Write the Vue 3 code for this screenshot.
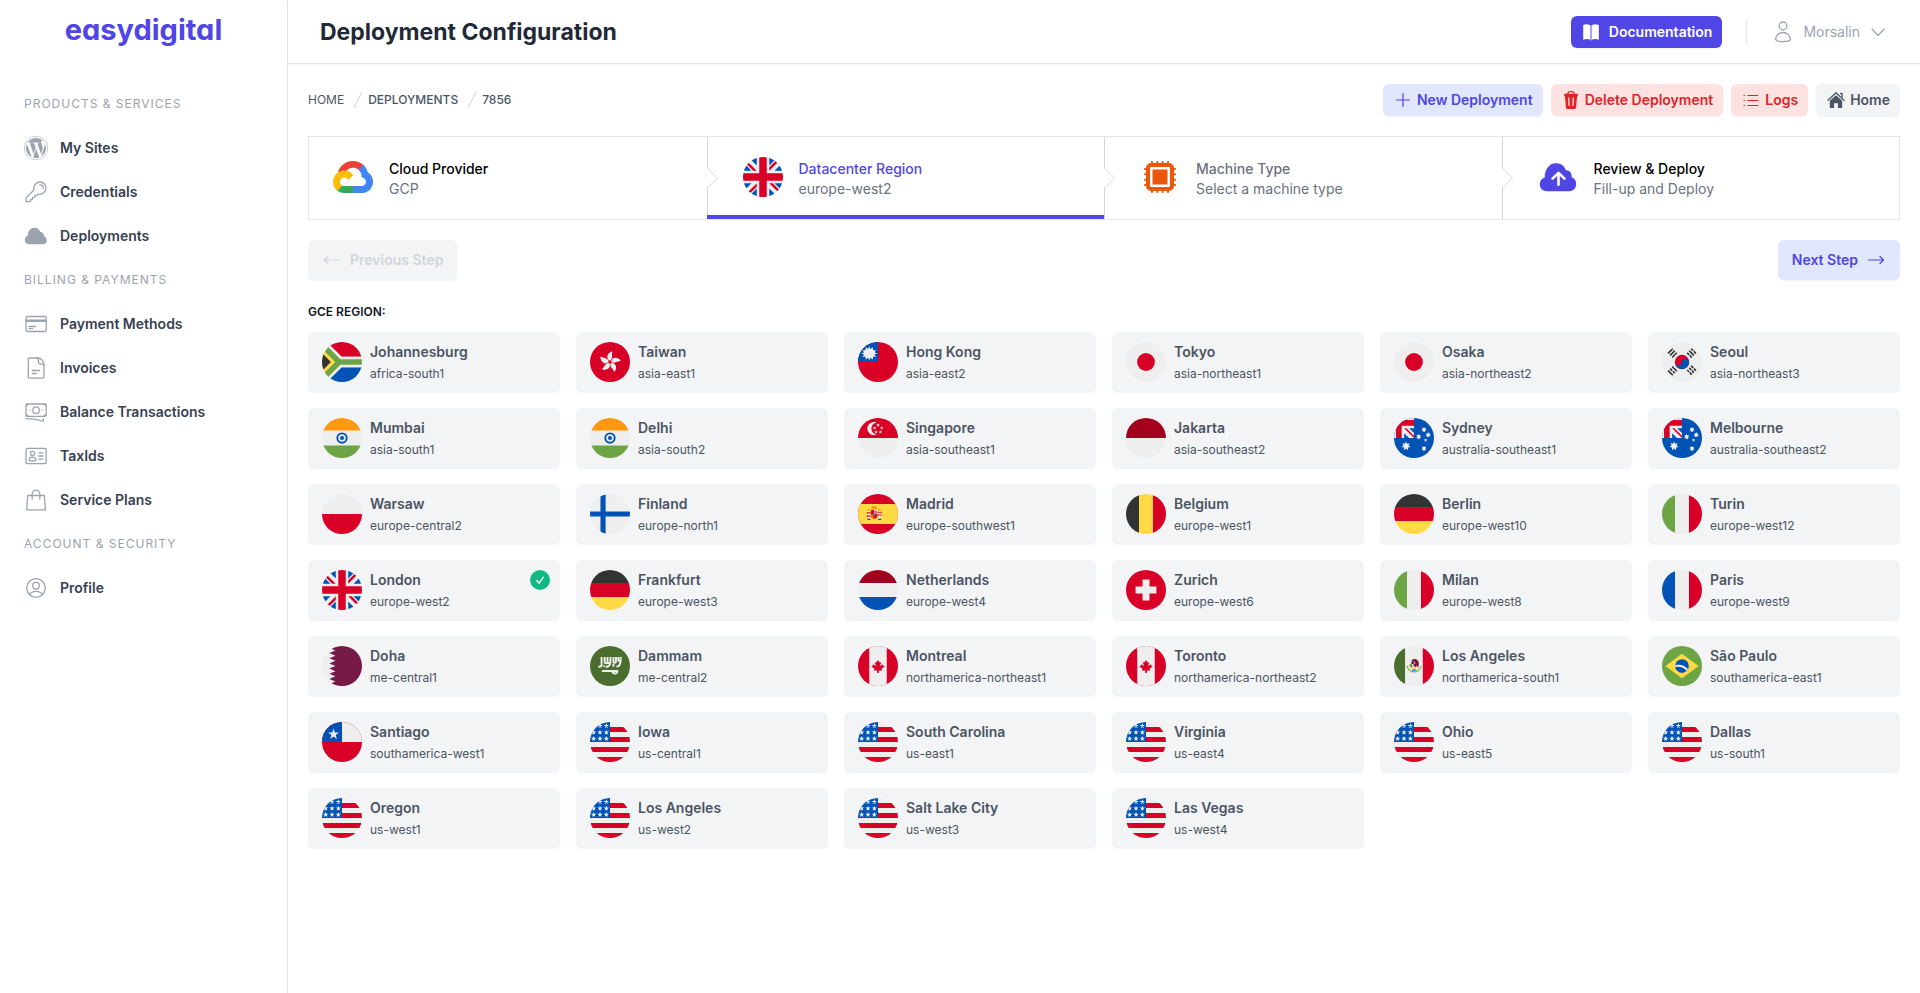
<template>
  <div class="layout">
    <!-- icon + flag sprite -->
    <svg class="sprite" aria-hidden="true">
      <symbol id="icon-wordpress" viewBox="0 0 512 512">
        <circle cx="256" cy="256" r="249" fill="none" stroke="currentColor" stroke-width="12" />
        <path fill="currentColor" d="M61.7 169.4l101.5 278C92.2 413 43.3 340.2 43.3 256c0-30.9 6.6-60.1 18.4-86.6zm337.9 75.9c0-26.3-9.4-44.5-17.5-58.7-10.8-17.5-20.9-32.4-20.9-49.9 0-19.6 14.8-37.8 35.7-37.8.9 0 1.8.1 2.8.2-37.9-34.7-88.3-55.9-143.7-55.9-74.3 0-139.7 38.1-177.8 95.9 5 .2 9.7.3 13.7.3 22.2 0 56.7-2.7 56.7-2.7 11.5-.7 12.8 16.2 1.4 17.5 0 0-11.5 1.3-24.3 2l77.5 230.4L249.8 247l-33.1-90.8c-11.5-.7-22.3-2-22.3-2-11.5-.7-10.1-18.2 1.3-17.5 0 0 35.1 2.7 56 2.7 22.2 0 56.7-2.7 56.7-2.7 11.5-.7 12.8 16.2 1.4 17.5 0 0-11.5 1.3-24.3 2l76.9 228.7 21.2-70.9c9-29.4 16-50.5 16-68.7zm-139.9 29.3l-63.8 185.5c19.1 5.6 39.2 8.7 60.1 8.7 24.8 0 48.5-4.3 70.6-12.1-.6-.9-1.1-1.9-1.5-2.9l-65.4-179.2zm183-120.7c.9 6.8 1.4 14 1.4 21.9 0 21.6-4 45.8-16.2 76.2l-65 187.9C426.2 403 468.7 334.5 468.7 256c0-37-9.4-71.8-26-102.1z" />
      </symbol>
      <symbol id="icon-key" viewBox="0 0 24 24">
        <g fill="none" stroke="currentColor" stroke-width="1.3" stroke-linejoin="round" stroke-linecap="round">
          <path d="M9.7 10.2C9.2 6.3 11.6 2 15.9 2c3.4 0 6.1 2.7 6.1 6.100 0 4.200-4.100 6.900-8.200 6.200l-1.200 1.300h-1.700l-.4 1.700-2 .3-.2 1.900-1.800.2v1.900H2v-3.700z" />
          <path d="M15.8 4.8a3.600 3.600 0 0 1 3.500 3.500" />
        </g>
      </symbol>
      <symbol id="icon-cloud" viewBox="0 0 24 24">
        <path fill="currentColor" d="M5 20.300a4.300 4.300 0 0 1-3.600-6.500 4.200 4.200 0 0 1 2.400-2.200C3.700 7 6.600 3.800 10.500 3.800c3 0 4.900 1.600 5.900 4.300 2.300.1 3.600 1.800 3.500 4 1.700.9 2.900 2.300 2.900 4.300 0 2.200-1.600 3.900-3.900 3.900z" />
      </symbol>
      <symbol id="icon-card" viewBox="0 0 24 24">
        <g fill="none" stroke="currentColor" stroke-width="1.3" stroke-linecap="round">
          <rect x="2" y="4.500" width="20.200" height="15" rx="1.800" />
          <path d="M2 8.100h20M2 9.300h20M5 14.500h6.500M5 16.700h3.500" />
        </g>
      </symbol>
      <symbol id="icon-document" viewBox="0 0 24 24">
        <g fill="none" stroke="currentColor" stroke-width="1.300" stroke-linecap="round" stroke-linejoin="round">
          <path d="M5.500 2h8.300c3.200 0 6.200 3.400 6.200 6.600v12.300a1.200 1.200 0 0 1-1.200 1.200H5.500a1.200 1.200 0 0 1-1.200-1.200V3.200A1.200 1.200 0 0 1 5.500 2z" />
          <path d="M12.800 2c1.700.5 1.800 2 1.700 4.300 0 1 .4 1.500 1.400 1.500 2.100 0 3.600.3 4.100 1.700M8.300 14.500h7.500M8.300 17.500h4" />
        </g>
      </symbol>
      <symbol id="icon-cash" viewBox="0 0 24 24">
        <g fill="none" stroke="currentColor" stroke-width="1.300" stroke-linecap="round" stroke-linejoin="round">
          <rect x="2" y="4" width="20.200" height="12.300" rx="1.200" />
          <circle cx="12.100" cy="10.200" r="3.300" />
          <path d="M2.500 5.600l1.700-1.400M21.700 5.600L20 4.200M2.500 14.800l1.700 1.300M21.700 14.800L20 16.100M6 10.200h.1M18.100 10.200h.1M2 18.700c6 0 11 .6 16.200 2.300.8.200 1.300-.2 1.300-1v-1.200" />
        </g>
      </symbol>
      <symbol id="icon-id" viewBox="0 0 24 24">
        <g fill="none" stroke="currentColor" stroke-width="1.300" stroke-linecap="round">
          <rect x="2" y="4.300" width="20.200" height="15.400" rx="1.800" />
          <circle cx="8.500" cy="9.500" r="2.100" />
          <path d="M5.200 16.300c0-2.100 1.300-3.100 3.300-3.100s3.300 1 3.300 3.100c-1.500.5-5 .5-6.600 0zM14.800 8.800h4.300M14.800 12h4.300M14.800 15.200h4.300" />
        </g>
      </symbol>
      <symbol id="icon-bag" viewBox="0 0 24 24">
        <g fill="none" stroke="currentColor" stroke-width="1.300" stroke-linecap="round" stroke-linejoin="round">
          <path d="M3.800 7.500h16.500l1.100 14.300H2.700zM8.200 11.200V6a3.800 3.800 0 0 1 7.600 0v5.200" />
        </g>
      </symbol>
      <symbol id="icon-profile" viewBox="0 0 24 24">
        <g fill="none" stroke="currentColor" stroke-width="1.300" stroke-linecap="round">
          <circle cx="12" cy="12" r="9.300" />
          <circle cx="12" cy="9.700" r="3.300" />
          <path d="M5.500 18.700c1.200-2.200 3.600-3.300 6.500-3.300s5.300 1.100 6.500 3.300" />
        </g>
      </symbol>
      <symbol id="icon-user" viewBox="0 0 24 24">
        <g fill="none" stroke="currentColor" stroke-width="1.300">
          <circle cx="12" cy="5.900" r="3.900" />
          <path d="M4.600 19.700c0-4 3-7.200 7.400-7.200s7.400 3.200 7.400 7.200c-1.700 2.600-13.100 2.600-14.800 0z" />
        </g>
      </symbol>
      <symbol id="icon-chevron" viewBox="0 0 20 20">
        <path d="M4 7l6 6.500L16 7" fill="none" stroke="currentColor" stroke-width="1.200" stroke-linecap="round" stroke-linejoin="round" />
      </symbol>
      <symbol id="icon-book" viewBox="0 0 20 20">
        <path fill="currentColor" d="M2.200 3C4.600 2 7 2 9.200 3.300v14.500c-2.100-1.200-4.600-1.200-7 0zM10.800 3.300C13 2 15.400 2 17.800 3v14.800c-2.400-1.200-4.900-1.200-7 0z" />
        <path fill="currentColor" opacity=".5" d="M9.200 3.500h1.600v15H9.200z" />
      </symbol>
      <symbol id="icon-plus" viewBox="0 0 20 20">
        <path d="M10 3.500v13M3.500 10h13" stroke="currentColor" stroke-width="1.200" stroke-linecap="round" />
      </symbol>
      <symbol id="icon-trash" viewBox="0 0 20 20">
        <path fill="currentColor" fill-rule="evenodd" d="M6.300 3.800C6.300 2 7.300 1 9.200 1h1.600c1.900 0 2.900 1 2.900 2.800h3.100v2.400h-.7l-1 11c-.1 1.200-.8 1.800-1.900 1.800H6.800c-1.100 0-1.800-.6-1.900-1.800l-1-11h-.7V3.800zm1.300 0h4.800c0-1-.6-1.500-1.600-1.500H9.200c-1 0-1.600.5-1.600 1.500zM7 7.500l.5 8.500h1.200L8.300 7.500zm4.700 0l-.4 8.500h1.200l.5-8.500z" />
      </symbol>
      <symbol id="icon-list" viewBox="0 0 20 20">
        <path d="M6.500 5.500h10.800M6.500 10.500h10.800M6.500 15.500h10.800M2.500 5.500h1.400M2.500 10.500h1.400M2.500 15.500h1.400" stroke="currentColor" stroke-width="1.200" />
      </symbol>
      <symbol id="icon-home" viewBox="0 0 20 20">
        <path fill="currentColor" d="M10 5.200l6.200 5.600v7.300h-4.300v-4.900H8.100v4.900H3.800v-7.300z" />
        <path d="M2 10.200l8-7.400 8 7.400M14.600 3.500h1.500v3.300" fill="none" stroke="currentColor" stroke-width="1.300" stroke-linecap="round" stroke-linejoin="round" />
      </symbol>
      <symbol id="icon-slash" viewBox="0 0 20 20">
        <path fill="currentColor" d="M5.555 17.776l8-16 .894.448-8 16-.894-.448z" />
      </symbol>
      <symbol id="icon-arrow-left" viewBox="0 0 20 20">
        <path d="M17.500 10h-15M6 6.500L2.500 10 6 13.500" fill="none" stroke="currentColor" stroke-width="1.200" stroke-linecap="round" stroke-linejoin="round" />
      </symbol>
      <symbol id="icon-arrow-right" viewBox="0 0 20 20">
        <path d="M2.500 10h15M14 6.500l3.500 3.500-3.500 3.500" fill="none" stroke="currentColor" stroke-width="1.200" stroke-linecap="round" stroke-linejoin="round" />
      </symbol>
      <symbol id="icon-check" viewBox="0 0 20 20">
        <circle cx="10" cy="10" r="10" fill="#10b981" />
        <path d="M6.600 10.500l2.500 2.700 4.300-6" fill="none" stroke="#fff" stroke-width="1.300" stroke-linecap="round" stroke-linejoin="round" />
      </symbol>

      <symbol id="step-gcp" viewBox="0 -25 256 256">
        <path fill="#ea4335" d="M170.252 56.819l22.253-22.253 1.483-9.37C153.437-11.677 88.976-7.496 52.420 33.920 42.267 45.423 34.734 59.764 30.717 74.573l7.970-1.123 44.505-7.340 3.436-3.513c19.797-21.742 53.270-24.667 76.128-6.168l7.496.390z" />
        <path fill="#4285f4" d="M224.205 73.918a100.249 100.249 0 0 0-30.217-48.722l-31.232 31.232a55.515 55.515 0 0 1 20.379 44.037v5.544c15.350 0 27.797 12.445 27.797 27.796 0 15.352-12.446 27.485-27.797 27.485h-55.671l-5.466 5.934v33.340l5.466 5.231h55.670c39.930.311 72.553-31.494 72.864-71.424a72.303 72.303 0 0 0-31.793-60.453" />
        <path fill="#34a853" d="M71.870 205.796h55.593V161.290H71.870a27.275 27.275 0 0 1-11.400-2.498l-7.887 2.420-22.409 22.253-1.952 7.574a71.835 71.835 0 0 0 43.648 14.757" />
        <path fill="#fbbc05" d="M71.870 61.425C31.940 61.664-.237 94.228.001 134.158a72.301 72.301 0 0 0 28.222 56.880l32.248-32.246c-13.990-6.322-20.208-22.786-13.887-36.776 6.320-13.990 22.786-20.208 36.775-13.888a27.796 27.796 0 0 1 13.887 13.888l32.248-32.248A72.224 72.224 0 0 0 71.870 61.425z" />
      </symbol>
      <symbol id="step-chip" viewBox="0 0 40 40">
        <g fill="none" stroke="#ea580c">
          <rect x="8" y="8" width="24" height="24" rx="3" stroke-width="4" />
          <path stroke-width="2" stroke-linecap="round" d="M12 5v3M17.300 5v3M22.700 5v3M28 5v3M12 32v3M17.300 32v3M22.700 32v3M28 32v3M5 12h3M5 17.300h3M5 22.700h3M5 28h3M32 12h3M32 17.300h3M32 22.700h3M32 28h3" />
        </g>
        <rect x="12.500" y="12.500" width="15" height="15" fill="#ea580c" />
      </symbol>
      <symbol id="step-deploy" viewBox="0 0 40 40">
        <path fill="#4f46e5" d="M9 34.200c-4.500 0-7.200-3.100-7.200-7 0-3.400 1.900-5.900 4.900-6.800C6.700 12.500 11 6.200 18 6.200c5 0 8.300 2.600 9.900 7 4-.1 6 2.900 5.700 6.900 2.900 1.300 4.600 3.700 4.600 6.900 0 4.100-2.800 7.200-6.800 7.200z" />
        <path d="M20.500 27.800V16.200M14.500 21.600l6-5.700 6 5.700" fill="none" stroke="#fff" stroke-width="2.600" stroke-linecap="round" stroke-linejoin="round" />
      </symbol>

      <symbol id="flag-za" viewBox="0 0 512 512">
        <path fill="#eee" d="M0 0h512v512H0z" />
        <path fill="#d80027" d="M60 0h452v190H252z" />
        <path fill="#0052b4" d="M60 512h452V322H252z" />
        <path fill="none" stroke="#eee" stroke-width="136" d="M-60-24l280 280h340M-60 536l280-280" />
        <path fill="#ffda44" d="M0 86l170 170L0 426z" />
        <path fill="#333" d="M0 142l114 114L0 370z" />
        <path fill="none" stroke="#6da544" stroke-width="72" d="M-60-24l280 280h340M-60 536l280-280" />
      </symbol>
      <symbol id="flag-hk" viewBox="0 0 512 512">
        <path fill="#d80027" d="M0 0h512v512H0z" />
        <g fill="#eee">
          <path id="petal" d="M254 240c-42-22-52-86 26-122 12 28-4 40 2 62 8 28-8 48-28 60z" />
          <use href="#petal" transform="rotate(72 256 256)" />
          <use href="#petal" transform="rotate(144 256 256)" />
          <use href="#petal" transform="rotate(216 256 256)" />
          <use href="#petal" transform="rotate(288 256 256)" />
        </g>
      </symbol>
      <symbol id="flag-tw" viewBox="0 0 512 512">
        <path fill="#d80027" d="M0 0h512v512H0z" />
        <path fill="#0052b4" d="M0 0h256v256H0z" />
        <path fill="#eee" d="M232 149l-36 14 22 31-38-5-5 38-31-22-14 36-14-36-31 22-5-38-38 5 22-31-36-14 36-14-22-31 38 5 5-38 31 22 14-36 14 36 31-22 5 38 38-5-22 31z" transform="translate(14 -3)" />
      </symbol>
      <symbol id="flag-jp" viewBox="0 0 512 512">
        <path fill="#eee" d="M0 0h512v512H0z" />
        <circle fill="#d80027" cx="256" cy="256" r="114" />
      </symbol>
      <symbol id="flag-kr" viewBox="0 0 512 512">
        <path fill="#eee" d="M0 0h512v512H0z" />
        <circle cx="256" cy="256" r="92" fill="#d80027" />
        <path fill="#0052b4" d="M164 256c0 51 41 92 92 92s92-41 92-92c0-30-22-46-46-46s-46 18-46 46-22 46-46 46-46-18-46-46z" />
        <g stroke="#333" stroke-width="21">
          <path d="M78 146l60-60M104 172l60-60M130 198l60-60" />
          <path d="M434 366l-26-26M400 332l-26-26M408 392l-26-26M374 358l-26-26M382 418l-26-26M348 384l-26-26" />
          <path d="M434 146l-26-26M400 112l-26-26M408 172l-60-60M382 198l-26-26M348 164l-26-26" />
          <path d="M78 366l60 60M104 340l26 26M138 374l26 26M130 314l60 60" />
        </g>
      </symbol>
      <symbol id="flag-in" viewBox="0 0 512 512">
        <path fill="#eee" d="M0 0h512v512H0z" />
        <path fill="#ff9811" d="M0 0h512v160H0z" />
        <path fill="#6da544" d="M0 352h512v160H0z" />
        <circle cx="256" cy="256" r="72" fill="#0052b4" />
        <circle cx="256" cy="256" r="48" fill="#eee" />
        <circle cx="256" cy="256" r="26" fill="#0052b4" />
      </symbol>
      <symbol id="flag-sg" viewBox="0 0 512 512">
        <path fill="#eee" d="M0 0h512v512H0z" />
        <path fill="#d80027" d="M0 0h512v256H0z" />
        <path fill="#eee" d="M204 50c-46 6-84 38-84 84s38 82 84 86c12 0 22-2 34-6-38-8-66-38-66-80s28-70 66-78c-12-4-22-6-34-6z" />
        <path fill="#eee" d="M256 68l6 16h18l-14 11 5 17-15-10-15 10 5-17-14-11h18zM212 104l6 16h18l-14 11 5 17-15-10-15 10 5-17-14-11h18zM304 104l6 16h18l-14 11 5 17-15-10-15 10 5-17-14-11h18zM230 156l6 16h18l-14 11 5 17-15-10-15 10 5-17-14-11h18zM286 156l6 16h18l-14 11 5 17-15-10-15 10 5-17-14-11h18z" />
      </symbol>
      <symbol id="flag-id" viewBox="0 0 512 512">
        <path fill="#eee" d="M0 256h512v256H0z" />
        <path fill="#a2001d" d="M0 0h512v256H0z" />
      </symbol>
      <symbol id="flag-au" viewBox="0 0 512 512">
        <path fill="#0052b4" d="M0 0h512v512H0z" />
        <path fill="#eee" d="M0 0h256v256H0z" />
        <path fill="#d80027" d="M256 26H100L26 100v156h72V98h158z" />
        <path fill="#0052b4" d="M256 130v62l-62-62zM130 256v-62l62 62z" />
        <path fill="#d80027" d="M130 130h28l98 98v28z" />
        <path fill="#eee" d="M154 300l14 30 32-8-14 30 25 20-32 7 1 33-26-21-26 21 1-33-33-7 26-20-14-30 32 8zM384 112l8 18 20-4-9 18 15 13-20 5v20l-14-12-14 12v-20l-20-5 15-13-9-18 20 4zM316 204l8 18 20-4-9 18 15 13-20 5v20l-14-12-14 12v-20l-20-5 15-13-9-18 20 4zM438 180l8 18 20-4-9 18 15 13-20 5v20l-14-12-14 12v-20l-20-5 15-13-9-18 20 4zM384 354l8 18 20-4-9 18 15 13-20 5v20l-14-12-14 12v-20l-20-5 15-13-9-18 20 4zM404 258l6 18h18l-15 11 6 17-15-10-15 10 6-17-15-11h18z" />
      </symbol>
      <symbol id="flag-pl" viewBox="0 0 512 512">
        <path fill="#eee" d="M0 0h512v256H0z" />
        <path fill="#d80027" d="M0 256h512v256H0z" />
      </symbol>
      <symbol id="flag-fi" viewBox="0 0 512 512">
        <path fill="#eee" d="M0 0h512v512H0z" />
        <path fill="#0052b4" d="M134 0h66v223h312v66H200v223h-66V289H0v-66h134z" />
      </symbol>
      <symbol id="flag-es" viewBox="0 0 512 512">
        <path fill="#d80027" d="M0 0h512v512H0z" />
        <path fill="#ffda44" d="M0 128h512v256H0z" />
        <path fill="#eee" d="M126 214h28v104h-28zM262 214h28v104h-28z" />
        <path fill="#0052b4" d="M120 318h38v14h-38zM258 318h38v14h-38z" />
        <path fill="#ff9811" d="M120 196h38v16h-38zM258 196h38v16h-38zM170 176c8-22 24-24 38-24s30 2 38 24l-6 20h-64z" />
        <path fill="#d80027" d="M112 234h48v14h-48zM256 262h48v14h-48zM112 276h48v14h-48zM256 226h48v14h-48zM166 206h84v70c0 22-18 42-42 42s-42-20-42-42z" />
        <path fill="#ff9811" d="M166 262h42v56c-26 0-42-20-42-40z" />
        <path fill="#eee" d="M208 206h42v46h-42z" />
        <path fill="#d80027" d="M220 216h18v26h-18zM176 262h8v44h-8zM194 262h8v50h-8z" />
        <circle cx="208" cy="258" r="13" fill="#338af3" />
      </symbol>
      <symbol id="flag-be" viewBox="0 0 512 512">
        <path fill="#333" d="M0 0h167v512H0z" />
        <path fill="#ffda44" d="M167 0h178v512H167z" />
        <path fill="#d80027" d="M345 0h167v512H345z" />
      </symbol>
      <symbol id="flag-de" viewBox="0 0 512 512">
        <path fill="#333" d="M0 0h512v167H0z" />
        <path fill="#d80027" d="M0 167h512v178H0z" />
        <path fill="#ffda44" d="M0 345h512v167H0z" />
      </symbol>
      <symbol id="flag-it" viewBox="0 0 512 512">
        <path fill="#6da544" d="M0 0h167v512H0z" />
        <path fill="#eee" d="M167 0h178v512H167z" />
        <path fill="#d80027" d="M345 0h167v512H345z" />
      </symbol>
      <symbol id="flag-fr" viewBox="0 0 512 512">
        <path fill="#0052b4" d="M0 0h167v512H0z" />
        <path fill="#eee" d="M167 0h178v512H167z" />
        <path fill="#d80027" d="M345 0h167v512H345z" />
      </symbol>
      <symbol id="flag-gb" viewBox="0 0 512 512">
        <path fill="#eee" d="M0 0h512v512H0z" />
        <path fill="#0052b4" d="M336 0v108L444 0Zm176 68L404 176h108zM0 176h108L0 68ZM68 0l108 108V0Zm108 512V404L68 512ZM0 444l108-108H0Zm512-108H404l108 108Zm-68 176L336 404v108z" />
        <path fill="#d80027" d="M0 0v45l131 131h45L0 0zm208 0v208H0v96h208v208h96V304h208v-96H304V0h-96zm259 0L336 131v45L512 0h-45zM176 336 0 512h45l131-131v-45zm160 0 176 176v-45L381 336h-45z" />
      </symbol>
      <symbol id="flag-nl" viewBox="0 0 512 512">
        <path fill="#a2001d" d="M0 0h512v167H0z" />
        <path fill="#eee" d="M0 167h512v178H0z" />
        <path fill="#0052b4" d="M0 345h512v167H0z" />
      </symbol>
      <symbol id="flag-ch" viewBox="0 0 512 512">
        <path fill="#d80027" d="M0 0h512v512H0z" />
        <path fill="#eee" d="M389.600 211.500h-89v-89h-89.100v89h-89v89h89v89h89v-89h89z" />
      </symbol>
      <symbol id="flag-qa" viewBox="0 0 512 512">
        <path fill="#eee" d="M0 0h180v512H0z" />
        <path fill="#751a46" d="M512 0H160l-66 25 78 33-78 33 78 33-78 33 78 33-78 33 78 33-78 33 78 33-78 33 78 33-78 33 78 33-78 33 66 25h352z" />
      </symbol>
      <symbol id="flag-sa" viewBox="0 0 512 512">
        <path fill="#496e2d" d="M0 0h512v512H0z" />
        <g fill="none" stroke="#eee" stroke-width="25">
          <path d="M106 262c28 8 42-4 42-26v-94M188 142v64c0 22 36 22 36 0v-64M224 200c0 24 38 24 38-4v-54M262 196c0 54-22 72-62 72M300 142v58c0 20 32 20 32 0v-58M362 142v40c0 14 30 14 30 0v-40M392 180c0 60-16 84-54 84M300 228v36M178 246v20" />
          <path d="M152 320h210M290 320v20c20 18 52 18 62-10" />
        </g>
      </symbol>
      <symbol id="flag-ca" viewBox="0 0 512 512">
        <path fill="#d80027" d="M0 0h512v512H0z" />
        <path fill="#eee" d="M144 0h224v512H144Z" />
        <path fill="#d80027" d="m301 289 44-22-22-11v-22l-45 22 23-44h-23l-22-34-22 33h-23l23 45-45-22v22l-22 11 45 22-12 23h45v33h22v-33h45z" />
      </symbol>
      <symbol id="flag-mx" viewBox="0 0 512 512">
        <path fill="#496e2d" d="M0 0h144v512H0z" />
        <path fill="#eee" d="M144 0h224v512H144z" />
        <path fill="#d80027" d="M368 0h144v512H368z" />
        <path fill="none" stroke="#6da544" stroke-width="18" stroke-dasharray="22 8" d="M170 256c8 100 164 100 172 0" />
        <path fill="none" stroke="#ffda44" stroke-width="10" d="M188 272c16 60 120 60 136 0" />
        <path fill="#751a46" d="M228 180c26-20 62-14 80 10 14 24 14 56 0 88l-18-24-14 20-18-18-14 8 10-28-34-8z" />
        <path fill="#eee" d="M258 196l16 34-8 4-16-32z" />
        <path fill="#6da544" d="M196 244c8-18 20-22 32-14l10 36-14 16c-16-8-26-20-28-38z" />
        <path fill="#ff9811" d="M236 286h42v20h-42z" />
        <path fill="#338af3" d="M230 306h52v16h-52z" />
      </symbol>
      <symbol id="flag-br" viewBox="0 0 512 512">
        <path fill="#6da544" d="M0 0h512v512H0z" />
        <path fill="#ffda44" d="M256 100l211 156-211 156L45 256z" />
        <circle cx="256" cy="256" r="88" fill="#0052b4" />
        <path fill="#eee" d="M211 240c-14 0-28 2-40 6l-2 26c50-14 106 0 146 44l20-18c-30-36-74-58-124-58z" />
      </symbol>
      <symbol id="flag-cl" viewBox="0 0 512 512">
        <path fill="#d80027" d="M0 0h512v512H0z" />
        <path fill="#0052b4" d="M0 0h256v256H0z" />
        <path fill="#eee" d="M256 0h256v256H256zM148 84l17 50h53l-43 32 16 51-43-31-43 31 16-51-43-32h53z" />
      </symbol>
      <symbol id="flag-us" viewBox="0 0 512 512">
        <path fill="#eee" d="M0 0h512v512H0z" />
        <path fill="#d80027" d="M224 64h288v64H224Zm0 128h288v64H256ZM0 320h512v64H0Zm0 128h512v64H0Z" />
        <path fill="#0052b4" d="M0 0h256v256H0Z" />
        <path fill="#eee" d="m187 243 57-41h-70l57 41-22-67zm-81 0 57-41H93l57 41-22-67zm-81 0 57-41H12l57 41-22-67zm162-81 57-41h-70l57 41-22-67zm-81 0 57-41H93l57 41-22-67zm-81 0 57-41H12l57 41-22-67Zm162-82 57-41h-70l57 41-22-67Zm-81 0 57-41H93l57 41-22-67zm-81 0 57-41H12l57 41-22-67Z" />
      </symbol>
    </svg>

    <aside class="sidebar">
      <a href="#" class="brand">easydigital</a>
      <nav>
        <section v-for="group in menu" :key="group.title">
          <h2 class="nav-title">{{ group.title }}</h2>
          <a v-for="item in group.items" :key="item.name" href="#" class="nav-item">
            <svg class="icon-lg"><use :href="'#icon-' + item.icon" /></svg>
            {{ item.name }}
          </a>
        </section>
      </nav>
    </aside>

    <div class="page">
      <header class="topbar">
        <h1>Deployment Configuration</h1>
        <div class="topbar-right">
          <a href="#" class="btn btn-primary">
            <svg class="icon"><use href="#icon-book" /></svg>
            Documentation
          </a>
          <span class="divider"></span>
          <button type="button" class="user">
            <svg class="icon-lg"><use href="#icon-user" /></svg>
            Morsalin
            <svg class="icon"><use href="#icon-chevron" /></svg>
          </button>
        </div>
      </header>

      <main>
        <div class="toolbar">
          <nav class="breadcrumb" aria-label="Breadcrumb">
            <a href="#" class="home">HOME</a>
            <svg class="icon"><use href="#icon-slash" /></svg>
            <a href="#">DEPLOYMENTS</a>
            <svg class="icon"><use href="#icon-slash" /></svg>
            <a href="#">7856</a>
          </nav>
          <div class="actions">
            <button type="button" class="btn btn-indigo"><svg class="icon"><use href="#icon-plus" /></svg>New Deployment</button>
            <button type="button" class="btn btn-red"><svg class="icon"><use href="#icon-trash" /></svg>Delete Deployment</button>
            <button type="button" class="btn btn-red"><svg class="icon"><use href="#icon-list" /></svg>Logs</button>
            <button type="button" class="btn btn-gray"><svg class="icon"><use href="#icon-home" /></svg>Home</button>
          </div>
        </div>

        <ol class="steps">
          <li v-for="(step, index) in steps" :key="step.title" class="step" :class="step.state">
            <svg v-if="index > 0" class="separator" viewBox="0 0 12 82" preserveAspectRatio="none">
              <path d="M0.5 0V31L10.5 41L0.5 51V82" fill="none" stroke="currentColor" />
            </svg>
            <svg class="step-icon" :class="{ round: step.round }"><use :href="'#' + step.icon" /></svg>
            <div class="step-text">
              <p class="step-title">{{ step.title }}</p>
              <p class="step-desc">{{ step.desc }}</p>
            </div>
          </li>
        </ol>

        <div class="step-buttons">
          <button type="button" class="btn btn-step btn-gray" disabled>
            <svg class="icon"><use href="#icon-arrow-left" /></svg>
            Previous Step
          </button>
          <button type="button" class="btn btn-step btn-indigo">
            Next Step
            <svg class="icon"><use href="#icon-arrow-right" /></svg>
          </button>
        </div>

        <h2 class="region-title">GCE REGION:</h2>
        <div class="regions">
          <button
            v-for="region in regions"
            :key="region.code"
            type="button"
            class="region"
            :aria-pressed="region.code === selected"
            @click="selected = region.code"
          >
            <svg class="flag"><use :href="'#flag-' + region.flag" /></svg>
            <span class="region-text">
              <span class="region-name">{{ region.name }}</span>
              <span class="region-code">{{ region.code }}</span>
            </span>
            <svg v-if="region.code === selected" class="icon"><use href="#icon-check" /></svg>
          </button>
        </div>
      </main>
    </div>
  </div>
</template>

<script setup>
import { ref } from 'vue'

const selected = ref('europe-west2')

const menu = [
  {
    title: 'PRODUCTS & SERVICES',
    items: [
      { name: 'My Sites', icon: 'wordpress' },
      { name: 'Credentials', icon: 'key' },
      { name: 'Deployments', icon: 'cloud' }
    ]
  },
  {
    title: 'BILLING & PAYMENTS',
    items: [
      { name: 'Payment Methods', icon: 'card' },
      { name: 'Invoices', icon: 'document' },
      { name: 'Balance Transactions', icon: 'cash' },
      { name: 'TaxIds', icon: 'id' },
      { name: 'Service Plans', icon: 'bag' }
    ]
  },
  {
    title: 'ACCOUNT & SECURITY',
    items: [{ name: 'Profile', icon: 'profile' }]
  }
]

const steps = [
  { title: 'Cloud Provider', desc: 'GCP', icon: 'step-gcp', state: 'done' },
  { title: 'Datacenter Region', desc: 'europe-west2', icon: 'flag-gb', round: true, state: 'current' },
  { title: 'Machine Type', desc: 'Select a machine type', icon: 'step-chip', state: 'upcoming' },
  { title: 'Review & Deploy', desc: 'Fill-up and Deploy', icon: 'step-deploy', state: 'done' }
]

const regions = [
  { name: 'Johannesburg', code: 'africa-south1', flag: 'za' },
  { name: 'Taiwan', code: 'asia-east1', flag: 'hk' },
  { name: 'Hong Kong', code: 'asia-east2', flag: 'tw' },
  { name: 'Tokyo', code: 'asia-northeast1', flag: 'jp' },
  { name: 'Osaka', code: 'asia-northeast2', flag: 'jp' },
  { name: 'Seoul', code: 'asia-northeast3', flag: 'kr' },
  { name: 'Mumbai', code: 'asia-south1', flag: 'in' },
  { name: 'Delhi', code: 'asia-south2', flag: 'in' },
  { name: 'Singapore', code: 'asia-southeast1', flag: 'sg' },
  { name: 'Jakarta', code: 'asia-southeast2', flag: 'id' },
  { name: 'Sydney', code: 'australia-southeast1', flag: 'au' },
  { name: 'Melbourne', code: 'australia-southeast2', flag: 'au' },
  { name: 'Warsaw', code: 'europe-central2', flag: 'pl' },
  { name: 'Finland', code: 'europe-north1', flag: 'fi' },
  { name: 'Madrid', code: 'europe-southwest1', flag: 'es' },
  { name: 'Belgium', code: 'europe-west1', flag: 'be' },
  { name: 'Berlin', code: 'europe-west10', flag: 'de' },
  { name: 'Turin', code: 'europe-west12', flag: 'it' },
  { name: 'London', code: 'europe-west2', flag: 'gb' },
  { name: 'Frankfurt', code: 'europe-west3', flag: 'de' },
  { name: 'Netherlands', code: 'europe-west4', flag: 'nl' },
  { name: 'Zurich', code: 'europe-west6', flag: 'ch' },
  { name: 'Milan', code: 'europe-west8', flag: 'it' },
  { name: 'Paris', code: 'europe-west9', flag: 'fr' },
  { name: 'Doha', code: 'me-central1', flag: 'qa' },
  { name: 'Dammam', code: 'me-central2', flag: 'sa' },
  { name: 'Montreal', code: 'northamerica-northeast1', flag: 'ca' },
  { name: 'Toronto', code: 'northamerica-northeast2', flag: 'ca' },
  { name: 'Los Angeles', code: 'northamerica-south1', flag: 'mx' },
  { name: 'São Paulo', code: 'southamerica-east1', flag: 'br' },
  { name: 'Santiago', code: 'southamerica-west1', flag: 'cl' },
  { name: 'Iowa', code: 'us-central1', flag: 'us' },
  { name: 'South Carolina', code: 'us-east1', flag: 'us' },
  { name: 'Virginia', code: 'us-east4', flag: 'us' },
  { name: 'Ohio', code: 'us-east5', flag: 'us' },
  { name: 'Dallas', code: 'us-south1', flag: 'us' },
  { name: 'Oregon', code: 'us-west1', flag: 'us' },
  { name: 'Los Angeles', code: 'us-west2', flag: 'us' },
  { name: 'Salt Lake City', code: 'us-west3', flag: 'us' },
  { name: 'Las Vegas', code: 'us-west4', flag: 'us' }
]
</script>

<style>
body {
  margin: 0;
  background: #fff;
}
</style>

<style scoped>
.layout {
  display: flex;
  min-height: 100vh;
  font-family: Inter, 'Liberation Sans', sans-serif;
  font-size: 14px;
  line-height: 20px;
  color: #374151;
}

.layout * {
  box-sizing: border-box;
}

h1,
h2,
p,
ol {
  margin: 0;
  padding: 0;
}

a {
  color: inherit;
  text-decoration: none;
}

button {
  font: inherit;
  border: 0;
  cursor: pointer;
}

.sprite {
  display: none;
}

.icon {
  width: 20px;
  height: 20px;
  flex-shrink: 0;
}

.icon-lg {
  width: 24px;
  height: 24px;
  flex-shrink: 0;
}

/* sidebar */
.sidebar {
  width: 288px;
  flex-shrink: 0;
  border-right: 1px solid #e5e7eb;
}

.brand {
  display: flex;
  align-items: center;
  justify-content: center;
  height: 60px;
  font-size: 29px;
  font-weight: 700;
  font-feature-settings: 'cv11';
  color: #4f46e5;
}

.sidebar nav {
  padding: 22px 24px 0;
}

.nav-title {
  display: flex;
  align-items: center;
  height: 44px;
  font-size: 12px;
  font-weight: 400;
  letter-spacing: 1px;
  color: #9ca3af;
}

.nav-item {
  display: flex;
  align-items: center;
  gap: 12px;
  height: 44px;
  font-weight: 600;
}

.nav-item svg {
  color: #9ca3af;
}

/* header */
.page {
  flex: 1;
  min-width: 0;
}

.topbar {
  display: flex;
  align-items: center;
  justify-content: space-between;
  height: 64px;
  padding: 0 32px;
  border-bottom: 1px solid #e5e7eb;
  box-shadow: 0 1px 2px rgba(0, 0, 0, 0.05);
}

.topbar h1 {
  font-size: 23px;
  line-height: 32px;
  font-weight: 700;
  color: #1f2937;
}

.topbar-right {
  display: flex;
  align-items: center;
  gap: 24px;
}

.divider {
  width: 1px;
  height: 24px;
  background: #e5e7eb;
}

.user {
  display: flex;
  align-items: center;
  gap: 8px;
  padding: 0;
  background: none;
  color: #9ca3af;
}

/* buttons */
.btn {
  display: flex;
  align-items: center;
  gap: 4px;
  height: 32px;
  padding: 0 10px;
  border-radius: 6px;
  font-weight: 600;
  box-shadow: 0 1px 2px rgba(0, 0, 0, 0.05);
}

.btn-primary {
  gap: 8px;
  background: #4f46e5;
  color: #fff;
}

.btn-indigo {
  background: #e0e7ff;
  color: #4f46e5;
}

.btn-red {
  background: #fee2e2;
  color: #dc2626;
}

.btn-gray {
  background: #f3f4f6;
  color: #4b5563;
}

.btn-step {
  gap: 8px;
  height: 40px;
  padding: 0 14px;
}

.btn:disabled {
  color: #d1d5db;
  cursor: not-allowed;
}

/* content */
main {
  padding: 20px;
}

.toolbar,
.step-buttons {
  display: flex;
  align-items: center;
  justify-content: space-between;
}

.actions {
  display: flex;
  gap: 8px;
}

.breadcrumb {
  display: flex;
  align-items: center;
  font-size: 12px;
  font-weight: 500;
  color: #4b5563;
}

.breadcrumb .home {
  font-weight: 400;
}

.breadcrumb .icon {
  margin-left: 4px;
  color: #d1d5db;
}

.steps {
  display: grid;
  grid-template-columns: repeat(4, 1fr);
  margin: 20px 0;
  border: 1px solid #e5e7eb;
  list-style: none;
}

.step {
  position: relative;
  display: flex;
  align-items: flex-start;
  gap: 16px;
  padding: 20px 24px;
}

.step + .step {
  padding-left: 36px;
}

.step.current::after {
  content: '';
  position: absolute;
  left: 0;
  right: 0;
  bottom: 0;
  height: 4px;
  background: #4f46e5;
}

.separator {
  position: absolute;
  top: 0;
  left: 0;
  width: 12px;
  height: 100%;
  color: #d1d5db;
}

.step-icon {
  width: 40px;
  height: 40px;
  flex-shrink: 0;
}

.round,
.flag {
  border-radius: 50%;
}

.step-text {
  padding-top: 2px;
  font-weight: 500;
}

.step-title {
  color: #000;
}

.step-desc {
  font-weight: 400;
  color: #6b7280;
}

.current .step-title {
  color: #4f46e5;
}

.upcoming .step-title {
  color: #6b7280;
}

.region-title {
  margin: 24px 0 12px;
  font-size: 12px;
  line-height: 16px;
  font-weight: 600;
  color: #111827;
}

.regions {
  display: grid;
  grid-template-columns: repeat(6, 1fr);
  gap: 16px;
}

.region {
  display: flex;
  align-items: flex-start;
  gap: 8px;
  padding: 10px 10px 10px 14px;
  border-radius: 6px;
  background: #f3f4f6;
  color: #4b5563;
  text-align: left;
  box-shadow: 0 1px 2px rgba(0, 0, 0, 0.05);
}

.flag {
  width: 40px;
  height: 40px;
  flex-shrink: 0;
}

.region-text {
  display: flex;
  flex: 1;
  flex-direction: column;
  gap: 4px;
}

.region-name {
  font-weight: 600;
}

.region-code {
  font-size: 12px;
  line-height: 16px;
}
</style>
